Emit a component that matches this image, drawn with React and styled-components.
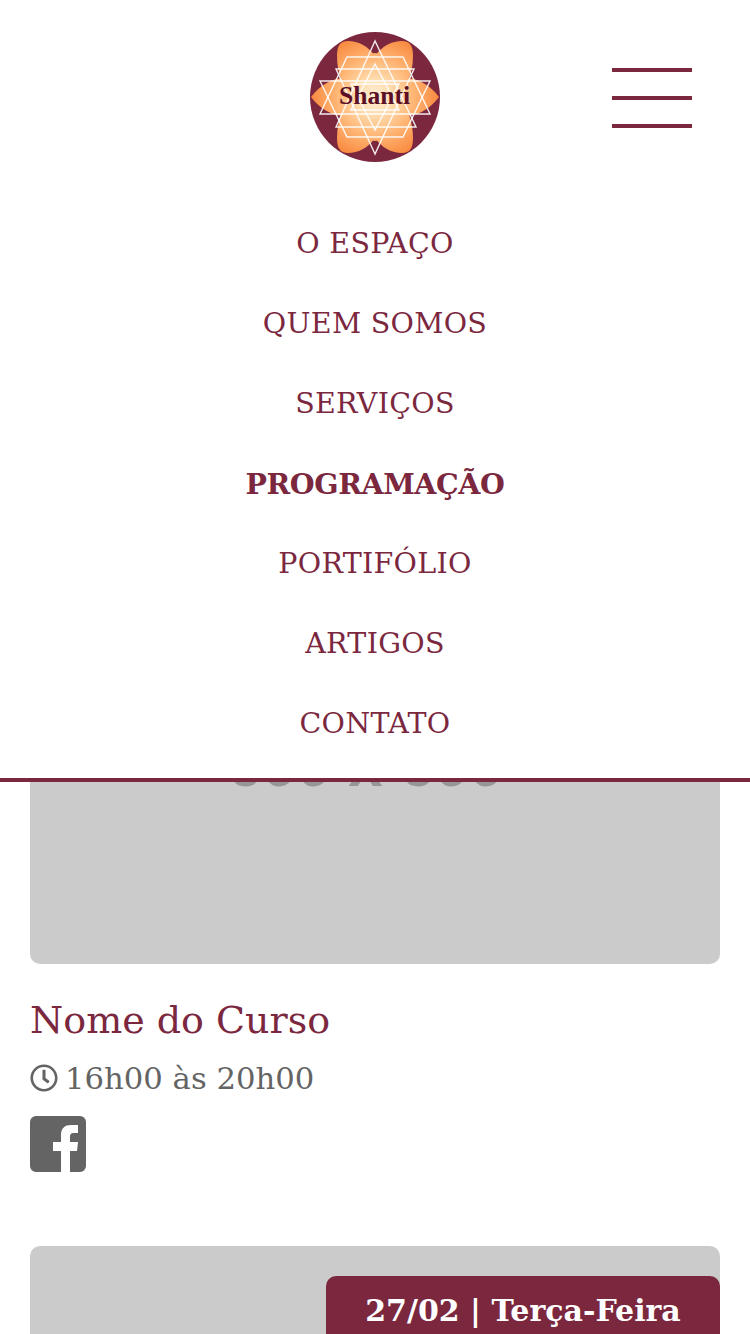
import React from "react";
import styled, { createGlobalStyle } from "styled-components";
import { FaRegClock } from "react-icons/fa";

const wine = "#7b283f";
const serif = '"DejaVu Serif", "Liberation Serif", serif';

const Global = createGlobalStyle`
  html, body { margin: 0; padding: 0; background: #fff; }
  #root { height: 1334px; overflow: hidden; position: relative; }
`;

const Header = styled.header`
  position: absolute;
  inset: 0 0 auto 0;
  height: 778px;
  background: #fff;
  border-bottom: 4px solid ${wine};
  z-index: 2;
`;
const TopBar = styled.div`
  display: flex;
  justify-content: center;
  padding-top: 32px;
  height: 171px;
`;
const Burger = styled.button`
  position: absolute;
  top: 68px;
  right: 58px;
  width: 80px;
  height: 60px;
  padding: 0;
  border: 0;
  background: none;
  display: flex;
  flex-direction: column;
  justify-content: space-between;
`;
const BurgerLine = styled.span`
  display: block;
  height: 4px;
  background: ${wine};
`;
const Menu = styled.nav`
  display: flex;
  flex-direction: column;
`;
const MenuItem = styled.a`
  height: 80px;
  line-height: 82px;
  text-align: center;
  color: ${wine};
  font-family: ${serif};
  font-size: 28.5px;
  letter-spacing: ${(p) => (p.$active ? "-0.4px" : "0.3px")};
  font-weight: ${(p) => (p.$active ? 700 : 400)};
`;
const Main = styled.main`
  padding: 566px 30px 0;
`;
const Thumb = styled.div`
  position: relative;
  height: ${(p) => p.$h}px;
  background: #cbcbcb;
  border-radius: 10px;
  display: flex;
  align-items: center;
  justify-content: center;
`;
const ThumbLabel = styled.span`
  margin-right: 19px;
  font-family: "Liberation Sans", Arial, sans-serif;
  font-weight: 700;
  font-size: 62px;
  color: #969696;
  line-height: 1;
`;
const Title = styled.h2`
  margin: 30px 0 0;
  font-family: ${serif};
  font-weight: 400;
  font-size: 38px;
  line-height: 52px;
  color: ${wine};
`;
const Time = styled.div`
  margin-top: 12px;
  height: 40px;
  display: flex;
  align-items: center;
  gap: 7px;
  font-family: ${serif};
  font-size: 30.7px;
  color: #646464;
`;
const Social = styled.a`
  display: block;
  margin-top: 18px;
  width: 56px;
  height: 56px;
  color: #646464;
`;
const FbSvg = styled.svg`
  display: block;
`;
const NextCard = styled.div`
  margin-top: 74px;
`;
const DateBadge = styled.div`
  position: absolute;
  top: 30px;
  right: 0;
  width: 394px;
  height: 70px;
  box-sizing: border-box;
  padding-top: 14px;
  background: ${wine};
  border-radius: 10px 10px 0 0;
  color: #fff;
  text-align: center;
  font-family: ${serif};
  font-weight: 700;
  font-size: 30px;
  line-height: 42px;
`;

const Logo = () => (
  <svg width="130" height="130" viewBox="0 0 130 130">
    <defs>
      <radialGradient id="petal" cx="65" cy="65" r="65" gradientUnits="userSpaceOnUse">
        <stop offset="0" stopColor="#fff1d8" />
        <stop offset="0.28" stopColor="#ffdcae" />
        <stop offset="0.6" stopColor="#ffb574" />
        <stop offset="1" stopColor="#f8873c" />
      </radialGradient>
    </defs>
    <circle cx="65" cy="65" r="65" fill={wine} />
    <g fill="url(#petal)">
      <path d="M65 24 C58 14 48 9 38 9 C30 9 27 14 27 24 C27 34 29 42 32 50 L65 65Z" />
      <path d="M65 24 C72 14 82 9 92 9 C100 9 103 14 103 24 C103 34 101 42 98 50 L65 65Z" />
      <path d="M65 106 C58 116 48 121 38 121 C30 121 27 116 27 106 C27 96 29 88 32 80 L65 65Z" />
      <path d="M65 106 C72 116 82 121 92 121 C100 121 103 116 103 106 C103 96 101 88 98 80 L65 65Z" />
      <path d="M1 65 C10 53 22 46 36 46 C50 46 60 56 65 65 C60 74 50 84 36 84 C22 84 10 77 1 65Z" />
      <path d="M129 65 C120 53 108 46 94 46 C80 46 70 56 65 65 C70 74 80 84 94 84 C108 84 120 77 129 65Z" />
      <ellipse cx="65" cy="65" rx="22" ry="44" />
    </g>
    <g fill="none" stroke="#fff" strokeWidth="1.4" strokeOpacity="0.9">
      <path d="M65 9 L26 95 L106 95Z" />
      <path d="M65 122 L26 37 L104 37Z" />
      <path d="M10 49 L120 49 L93 105 L37 105Z" />
      <path d="M10 82 L120 82 L93 25 L37 25Z" />
      <path d="M65 32 L41 78 L89 78Z" />
      <path d="M65 98 L41 52 L89 52Z" />
    </g>
    <text x="64.5" y="72" textAnchor="middle" fontFamily='"Liberation Serif", serif' fontWeight="700" fontSize="25" fill="#5a0f26" textLength="71" lengthAdjust="spacingAndGlyphs">Shanti</text>
  </svg>
);

const FbIcon = () => (
  <FbSvg width="56" height="56" viewBox="0 0 56 56">
    <path
      fill="currentColor"
      fillRule="evenodd"
      d="M6 0H50A6 6 0 0 1 56 6V50A6 6 0 0 1 50 56H6A6 6 0 0 1 0 50V6A6 6 0 0 1 6 0Z M31 56V35H23V26H31V19C31 12 35 9 41 9H48V17H44C41 17 40 18 40 21V26H48L47 35H40V56Z"
    />
  </FbSvg>
);

const items = ["O ESPAÇO", "QUEM SOMOS", "SERVIÇOS", "PROGRAMAÇÃO", "PORTIFÓLIO", "ARTIGOS", "CONTATO"];

export default function App() {
  return (
    <>
      <Global />
      <Header>
        <TopBar><Logo /></TopBar>
        <Burger aria-label="menu"><BurgerLine /><BurgerLine /><BurgerLine /></Burger>
        <Menu>
          {items.map((t) => (
            <MenuItem key={t} $active={t === "PROGRAMAÇÃO"}>{t}</MenuItem>
          ))}
        </Menu>
      </Header>
      <Main>
        <Thumb $h={398}><ThumbLabel>600 x 600</ThumbLabel></Thumb>
        <Title>Nome do Curso</Title>
        <Time><FaRegClock size={28} />16h00 às 20h00</Time>
        <Social><FbIcon /></Social>
        <NextCard>
          <Thumb $h={398}><DateBadge>27/02 | Terça-Feira</DateBadge></Thumb>
        </NextCard>
      </Main>
    </>
  );
}
